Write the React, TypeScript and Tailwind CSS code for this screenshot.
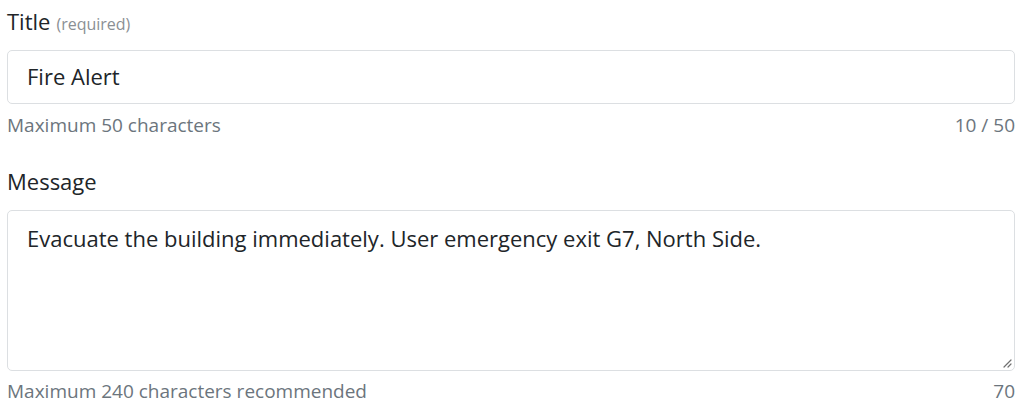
import React from "react";

export default function App() {
  return (
    <div
      className="w-[1024px] h-[417px] bg-white pl-[7px] pr-[9px] text-[#212529] overflow-hidden"
      style={{ fontFamily: '"Open Sans", "Noto Sans", sans-serif' }}
    >
      <div className="pt-[5px] flex items-baseline gap-[6px]">
        <span className="text-[22px] leading-[32px]">Title</span>
        <span className="text-[16px] text-[#8a8f94]">(required)</span>
      </div>
      <div className="mt-[13px] h-[54px] border border-[#dcdfe2] rounded-[5px] flex items-center px-[19px] pb-[2px] text-[22px]">
        Fire Alert
      </div>
      <div className="flex justify-between text-[19px] text-[#6c757d] leading-[26px] mt-[8px]">
        <span>Maximum 50 characters</span>
        <span>10 / 50</span>
      </div>
      <div className="mt-[27px] text-[22px] leading-[32px]">Message</div>
      <div className="relative mt-[13px] h-[161px] border border-[#dcdfe2] rounded-[5px] px-[19px] pt-[11px] text-[22px] leading-[32px]">
        Evacuate the building immediately. User emergency exit G7, North Side.
        <svg className="absolute right-[2px] bottom-[2px]" width="10" height="10" viewBox="0 0 10 10">
          <path d="M9 2 L2 9 M9 6 L6 9" stroke="#707070" strokeWidth="1.2" strokeLinecap="round" />
        </svg>
      </div>
      <div className="flex justify-between text-[19px] text-[#6c757d] leading-[26px] mt-[7px]">
        <span>Maximum 240 characters recommended</span>
        <span>70</span>
      </div>
    </div>
  );
}
